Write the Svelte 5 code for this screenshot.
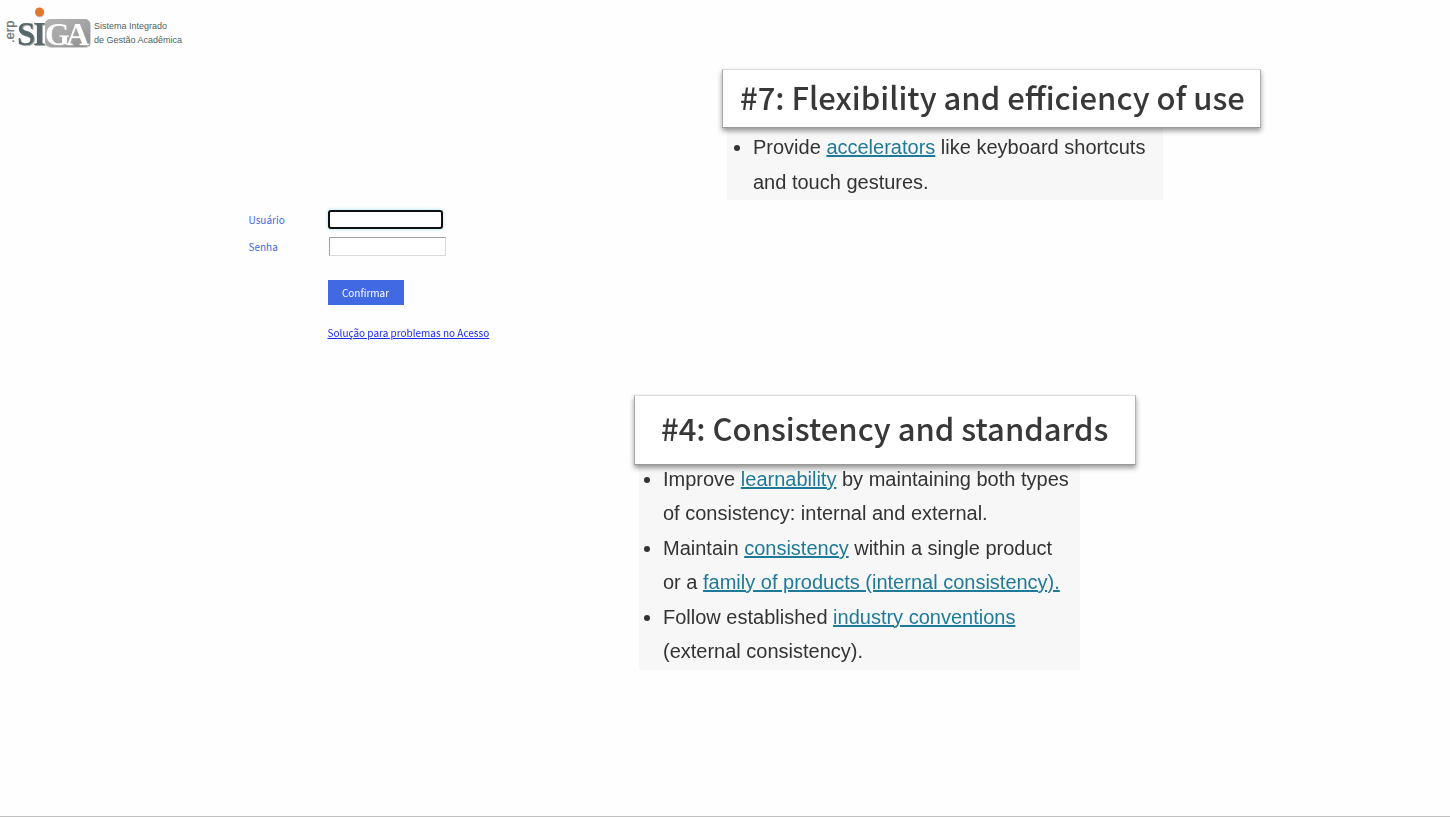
<script>
  let user = $state('');
  let password = $state('');
  let userField;

  $effect(() => {
    userField?.focus();
  });
</script>

<div class="page">
  <header>
    <svg class="logo" width="92" height="52" viewBox="0 0 92 52" role="img" aria-label=".erp SIGA">
      <defs>
        <linearGradient id="plate" x1="0" y1="0" x2="1" y2="1">
          <stop offset="0" stop-color="#b4b4b4" />
          <stop offset="0.5" stop-color="#a6a6a6" />
          <stop offset="1" stop-color="#8c8c8c" />
        </linearGradient>
      </defs>
      <rect x="46" y="20" width="45" height="28" rx="5" fill="#d2d2d2" />
      <rect x="45" y="19" width="45" height="28" rx="5" fill="url(#plate)" />
      <text class="erp" transform="translate(14 43) rotate(-90)">.erp</text>
      <text class="siga" y="45"><tspan class="dark" x="17 33">SI</tspan><tspan class="light" x="45 66">GA</tspan></text>
      <circle cx="40" cy="13" r="4.5" fill="#cfcfcf" />
      <circle cx="39.5" cy="12" r="4.5" fill="#e2762b" />
    </svg>
    <p class="tagline">Sistema Integrado<br />de Gestão Acadêmica</p>
  </header>

  <main>
    <form onsubmit={(event) => event.preventDefault()}>
      <label for="user">Usuário</label>
      <input id="user" class="active" type="text" bind:this={userField} bind:value={user} />
      <label for="password">Senha</label>
      <input id="password" type="password" bind:value={password} />
      <button type="submit">Confirmar</button>
      <a href="#acesso">Solução para problemas no Acesso</a>
    </form>

    <div class="notes">
      <section class="flexibility">
        <h2>#7: Flexibility and efficiency of use</h2>
        <ul>
          <li>Provide <a href="#accelerators">accelerators</a> like keyboard shortcuts and touch gestures.</li>
        </ul>
      </section>
      <section class="consistency">
        <h2>#4: Consistency and standards</h2>
        <ul>
          <li>Improve <a href="#learnability">learnability</a> by maintaining both types of consistency: internal and external.</li>
          <li>Maintain <a href="#consistency">consistency</a> within a single product or a <a href="#family">family of products (internal consistency).</a></li>
          <li>Follow established <a href="#conventions">industry conventions</a> (external consistency).</li>
        </ul>
      </section>
    </div>
  </main>
</div>

<style>
  :global(body) {
    margin: 0;
    background: #fefefe;
  }

  .page {
    box-sizing: border-box;
    min-height: 100vh;
    border-bottom: 1px solid #c0c0c0;
    font-family: "Liberation Sans", Arial, sans-serif;
  }

  header {
    display: flex;
    height: 69px;
  }

  .logo {
    flex: none;
  }

  .erp {
    font: 13px "Liberation Sans", Arial, sans-serif;
    fill: #707a79;
    stroke: #707a79;
    stroke-width: 0.3px;
  }

  .siga {
    font: bold 33px "Liberation Serif", "Times New Roman", serif;
    filter: drop-shadow(1px 1px 0 #a9adad);
  }

  .dark {
    fill: #56686a;
  }

  .light {
    font-size: 32px;
    fill: #ffffff;
  }

  .tagline {
    margin: 19px 0 0 2px;
    font-size: 9px;
    line-height: 14px;
    color: #4f5e5e;
  }

  main {
    display: grid;
    grid-template-columns: 634fr 816fr;
  }

  form {
    display: grid;
    grid-template-columns: 79px auto;
    align-content: start;
    align-items: center;
    justify-items: start;
    justify-content: start;
    row-gap: 8px;
    margin: 141px 0 0 39.2%;
    font-family: "Noto Sans CJK SC", "Open Sans", sans-serif;
    font-size: 10px;
    line-height: 16px;
  }

  label {
    color: #4169e1;
  }

  input {
    box-sizing: border-box;
    width: 117px;
    height: 19px;
    margin-left: 1px;
    padding: 1px;
    border: 1px solid;
    border-color: #a0a0a0 #dadada #dadada #a0a0a0;
    background: #ffffff;
    font: inherit;
    outline: none;
  }

  .active {
    width: 115px;
    margin-left: 0;
    border: 2px solid #101010;
    border-radius: 3px;
    box-shadow: 0 0 3px 1px #c4eef8;
  }

  button,
  form a {
    grid-column: 2;
  }

  button {
    width: 76px;
    height: 25px;
    margin-top: 16px;
    padding: 0;
    border: 0;
    background: #4169e1;
    color: #ffffff;
    font: inherit;
  }

  form a {
    margin-top: 12px;
    color: #1a2af0;
  }

  section {
    width: fit-content;
  }

  .flexibility {
    margin-left: 88px;
  }

  .consistency {
    margin-top: 195px;
  }

  h2 {
    position: relative;
    box-sizing: border-box;
    margin: 0;
    padding: 0 15px 4px 17px;
    border: 1px solid;
    border-color: #dcdcdc #b0b0b0 #989898 #a8a8a8;
    background: #ffffff;
    box-shadow: 0 3px 5px rgba(0, 0, 0, 0.4);
    font-family: "Noto Sans CJK SC", "Open Sans", sans-serif;
    font-size: 31px;
    font-weight: 500;
    line-height: 53px;
    color: #383838;
  }

  .consistency h2 {
    padding: 0 27px 4px 26px;
    line-height: 64px;
  }

  ul {
    box-sizing: border-box;
    width: 436px;
    margin: 0 0 0 5px;
    padding: 2px 8px 0 26px;
    background: #f7f7f7;
    font-size: 20px;
    line-height: 35px;
    color: #333333;
  }

  .consistency ul {
    width: 441px;
    margin-top: -3px;
    padding: 0 8px 2px 24px;
    line-height: 34px;
  }

  li + li {
    margin-top: 1px;
  }

  section a {
    color: #1f7a9a;
  }
</style>
